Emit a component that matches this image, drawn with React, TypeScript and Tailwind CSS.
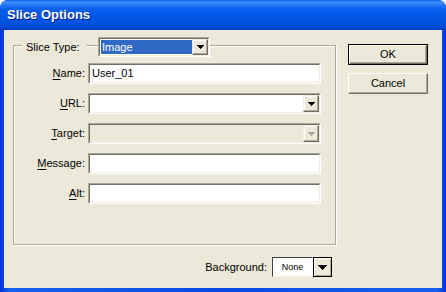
import React from 'react';

const Tri = ({ color = '#000', w = 7 }: { color?: string; w?: number }) => {
  const rows = Math.ceil(w / 2);
  return (
    <svg width={w} height={rows} shapeRendering="crispEdges">
      {Array.from({ length: rows }).map((_, i) => (
        <rect key={i} x={i} y={i} width={w - i * 2} height={1} fill={color} />
      ))}
    </svg>
  );
};

const ArrowBtn = ({ disabled = false }: { disabled?: boolean }) => (
  <div className="w-[16px] h-full shrink-0 border border-t-[#f1efe2] border-l-[#f1efe2] border-b-[#716f64] border-r-[#716f64] bg-[#ece9d8] flex items-center justify-center shadow-[inset_-1px_-1px_0_#aca899,inset_1px_1px_0_#fff]">
    <Tri color={disabled ? '#aca899' : '#000'} />
  </div>
);

// two-pixel sunken frame
const Sunken = ({ className = '', inner = 'bg-white', children }: { className?: string; inner?: string; children?: React.ReactNode }) => (
  <div className={`border border-t-[#aca899] border-l-[#aca899] border-b-white border-r-white ${className}`}>
    <div className={`h-full w-full flex border border-t-[#716f64] border-l-[#716f64] border-b-[#f1efe2] border-r-[#f1efe2] ${inner}`}>
      {children}
    </div>
  </div>
);

const Row = ({ label, u, children }: { label: string; u: number; children: React.ReactNode }) => (
  <div className="flex items-center h-[21px]">
    <span className="w-[71px] mr-[3px] text-right">
      {label.slice(0, u)}
      <span className="underline underline-offset-[2px]">{label[u]}</span>
      {label.slice(u + 1)}:
    </span>
    {children}
  </div>
);

const App = () => {
  return (
    <div className="w-[446px] h-[292px] bg-white font-['Liberation_Sans',Arial,sans-serif] text-[11px] text-black">
      <div className="flex flex-col h-full rounded-t-[8px] overflow-hidden bg-[linear-gradient(to_right,#0831d9,#1660ee_2%,#0a48e0_50%,#1660ee_98%,#0831d9)]">
        <div className="h-[30px] shrink-0 flex items-center pl-[7px] pb-[1px] bg-[linear-gradient(to_bottom,#0a5ee8_0%,#3d93ff_7%,#2a7cf6_15%,#0a5fec_30%,#0057e6_55%,#0052de_80%,#0047cf_94%,#0036b8_100%)]">
          <span className="text-white font-bold text-[13px] [text-shadow:1px_1px_0_#0a1c7a]">Slice Options</span>
        </div>
        <div className="flex-1 mx-[4px] mb-[4px] bg-[#ece9d8] flex">
          <div className="flex flex-col pl-[9px] pt-[15px]">
            <div className="relative w-[323px] h-[200px] border border-[#aca899] shadow-[1px_1px_0_#fff,inset_1px_1px_0_#fff]">
              <div className="absolute left-[8px] top-[-9px] flex items-center h-[20px]">
                <span className="w-[64px] pl-[4px] bg-[#ece9d8]">Slice Type:</span>
                <div className="ml-[12px] bg-[#ece9d8]">
                  <Sunken className="w-[112px] h-[20px]">
                    <div className="flex-1 my-[1px] ml-[1px] bg-[#316ac5] text-white pl-[1px] leading-[14px]">Image</div>
                    <ArrowBtn />
                  </Sunken>
                </div>
              </div>
              <div className="flex flex-col gap-[9px] pt-[17px]">
                <Row label="Name" u={0}>
                  <Sunken className="w-[233px] h-[21px]">
                    <span className="pl-[2px] self-center">User_01</span>
                  </Sunken>
                </Row>
                <Row label="URL" u={0}>
                  <Sunken className="w-[233px] h-[21px]">
                    <div className="flex-1" />
                    <ArrowBtn />
                  </Sunken>
                </Row>
                <Row label="Target" u={0}>
                  <Sunken className="w-[233px] h-[21px]" inner="bg-[#ece9d8]">
                    <div className="flex-1" />
                    <ArrowBtn disabled />
                  </Sunken>
                </Row>
                <Row label="Message" u={0}>
                  <Sunken className="w-[233px] h-[21px]" />
                </Row>
                <Row label="Alt" u={0}>
                  <Sunken className="w-[233px] h-[21px]" />
                </Row>
              </div>
            </div>
            <div className="mt-[12px] flex justify-end items-center pr-[4px]">
              <span className="mr-[5px]">Background:</span>
              <div className="flex w-[60px] h-[20px]">
                <div className="w-[41px] h-full bg-white border border-t-[#404040] border-l-[#404040] border-b-[#f1efe2] border-r-white flex items-center justify-center text-[9px] pt-[1px]">
                  None
                </div>
                <div className="w-[19px] h-full border border-black bg-[#ece9d8] flex items-center justify-center shadow-[inset_1px_1px_0_#fff,inset_-1px_-1px_0_#aca899]">
                  <Tri w={9} />
                </div>
              </div>
            </div>
          </div>
          <div className="ml-[12px] pt-[14px] flex flex-col gap-[8px]">
            <div className="w-[80px] h-[21px] border border-black">
              <div className="h-full w-full flex items-center justify-center border border-t-white border-l-white border-b-[#716f64] border-r-[#716f64] shadow-[inset_-1px_-1px_0_#aca899]">
                OK
              </div>
            </div>
            <div className="w-[80px] h-[21px] flex items-center justify-center border border-t-white border-l-white border-b-[#716f64] border-r-[#716f64] shadow-[inset_-1px_-1px_0_#aca899]">
              Cancel
            </div>
          </div>
        </div>
      </div>
    </div>
  );
};

export default App;
